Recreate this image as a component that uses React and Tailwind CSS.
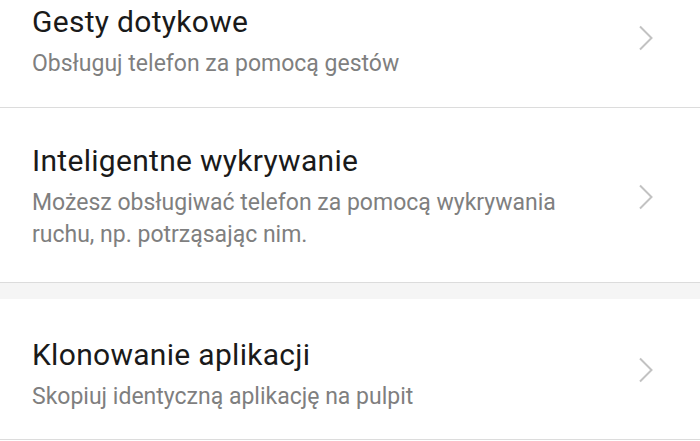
import React from "react";

const Chevron = ({ className }) => (
  <svg width="16" height="26" viewBox="0 0 16 26" className={`shrink-0 ${className}`}>
    <path d="M2 1.5 L13.5 13 L2 24.5" fill="none" stroke="#c2c2c2" strokeWidth="2" />
  </svg>
);

const Row = ({ title, lines, className, chevron }) => (
  <div className={`flex items-center justify-between pl-8 pr-[46px] bg-white border-b border-[#dcdcdc] ${className}`}>
    <div className="flex flex-col gap-[8px]">
      <div className="text-[30px] leading-[36px] tracking-[0.3px] text-[#1a1a1a]">{title}</div>
      <div className="text-[23px] leading-[32px] text-[#7f7f7f]">
        {lines.map((l, i) => (
          <div key={i}>{l}</div>
        ))}
      </div>
    </div>
    <Chevron className={chevron} />
  </div>
);

export default function App() {
  return (
    <div className="w-[700px] h-[441px] overflow-hidden bg-white" style={{ fontFamily: "Roboto, 'Noto Sans', sans-serif" }}>
      <Row
        className="pt-1 pb-[27px]"
        chevron="-mt-2"
        title="Gesty dotykowe"
        lines={["Obsługuj telefon za pomocą gestów"]}
      />
      <Row
        className="pt-[35px] pb-[31px]"
        chevron=""
        title="Inteligentne wykrywanie"
        lines={["Możesz obsługiwać telefon za pomocą wykrywania", "ruchu, np. potrząsając nim."]}
      />
      <div className="h-4 bg-[#f5f5f5]" />
      <Row
        className="pt-[38px] pb-[26px]"
        chevron="-mt-[10px]"
        title="Klonowanie aplikacji"
        lines={["Skopiuj identyczną aplikację na pulpit"]}
      />
    </div>
  );
}
